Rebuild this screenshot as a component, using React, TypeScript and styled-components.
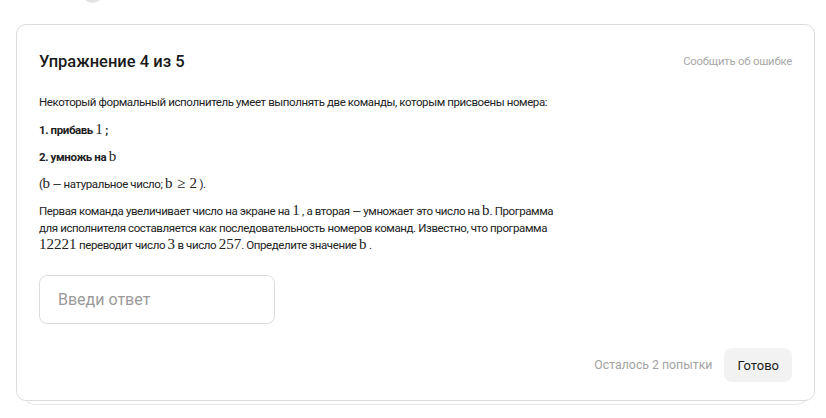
import React from 'react';
import styled, { createGlobalStyle } from 'styled-components';

const GlobalStyle = createGlobalStyle`
  html, body {
    margin: 0;
    padding: 0;
    background: #ffffff;
    font-family: Roboto, "Noto Sans", sans-serif;
    color: #222;
  }
`;

function App() {
  return (
    <>
      <GlobalStyle />
      <Page>
        <TopStrip>
          <Avatar />
        </TopStrip>
        <Stack>
          <Card>
            <Header>
              <Title>Упражнение 4 из 5</Title>
              <ReportLink>Сообщить об ошибке</ReportLink>
            </Header>
            <Body>
              <Para $after={11}>Некоторый формальный исполнитель умеет выполнять две команды, которым присвоены номера:</Para>
              <Para>
                <b>1. прибавь</b> <M>1</M> <b>;</b>
              </Para>
              <Para>
                <b>2. умножь на</b> <M>b</M>
              </Para>
              <Para>
                (<M>b</M> — натуральное число; <M>b</M> <Rel>≥</Rel> <M>2</M> ).
              </Para>
              <Para $before={1}>
                Первая команда увеличивает число на экране на <M>1</M> , а вторая — умножает это число на <M>b</M>. Программа
                <br />
                для исполнителя составляется как последовательность номеров команд. Известно, что программа
                <br />
                <M>12221</M> переводит число <M>3</M> в число <M>257</M>. Определите значение <M>b</M> .
              </Para>
            </Body>
            <AnswerInput placeholder="Введи ответ" />
            <Footer>
              <Attempts>Осталось 2 попытки</Attempts>
              <DoneBtn>Готово</DoneBtn>
            </Footer>
          </Card>
          <BackCard />
        </Stack>
      </Page>
    </>
  );
}

const Page = styled.div`
  width: 826px;
  height: 418px;
  overflow: hidden;
  box-sizing: border-box;
  padding: 0 11px 0 16px;
`;

const TopStrip = styled.div`
  height: 24px;
  position: relative;
`;

const Avatar = styled.div`
  position: absolute;
  left: 66px;
  top: -17px;
  width: 21px;
  height: 20px;
  border-radius: 50%;
  background: #e2e2e2;
`;

const Stack = styled.div`
  display: flex;
  flex-direction: column;
  align-items: center;
`;

const Card = styled.div`
  box-sizing: border-box;
  width: 100%;
  height: 377px;
  border: 1px solid #dcdcdc;
  border-radius: 10px;
  padding: 27px 22px 18px 22px;
  display: flex;
  flex-direction: column;
  background: #fff;
  position: relative;
  z-index: 1;
`;

const BackCard = styled.div`
  width: calc(100% - 18px);
  height: 10px;
  margin-top: -7px;
  border: 1px solid #e6e6e6;
  border-top: none;
  border-radius: 0 0 10px 10px;
`;

const Header = styled.div`
  display: flex;
  justify-content: space-between;
  align-items: center;
`;

const Title = styled.div`
  font-size: 16.5px;
  font-weight: 500;
  color: #1a1a1a;
`;

const ReportLink = styled.div`
  font-size: 11.3px;
  letter-spacing: -0.2px;
  color: #a8a8a8;
`;

const Body = styled.div`
  margin-top: 23px;
  font-size: 11.5px;
  letter-spacing: -0.4px;
  color: #222;
`;

const Para = styled.p<{ $before?: number; $after?: number }>`
  margin: ${(p) => p.$before ?? 0}px 0 ${(p) => p.$after ?? 10}px;
  line-height: 17px;
  white-space: nowrap;
  b {
    font-weight: 700;
  }
`;

const M = styled.span`
  font-family: "Liberation Serif", "DejaVu Serif", serif;
  font-size: 15px;
  line-height: 1;
  letter-spacing: 0;
`;

const Rel = styled(M)`
  margin: 0 2px;
`;

const AnswerInput = styled.input`
  box-sizing: border-box;
  margin-top: 11px;
  width: 236px;
  height: 49px;
  border: 1px solid #dcdcdc;
  border-radius: 8px;
  padding: 0 18px;
  font-family: Roboto, "Noto Sans", sans-serif;
  font-size: 16px;
  outline: none;
  &::placeholder {
    color: #9a9a9a;
  }
`;

const Footer = styled.div`
  margin-top: auto;
  display: flex;
  justify-content: flex-end;
  align-items: center;
  gap: 12px;
`;

const Attempts = styled.div`
  font-size: 12.3px;
  color: #a3a3a3;
`;

const DoneBtn = styled.button`
  height: 34px;
  padding: 0 13px;
  border: none;
  border-radius: 8px;
  background: #f2f2f2;
  font-family: Roboto, "Noto Sans", sans-serif;
  font-size: 13px;
  color: #1a1a1a;
`;

export default App;
